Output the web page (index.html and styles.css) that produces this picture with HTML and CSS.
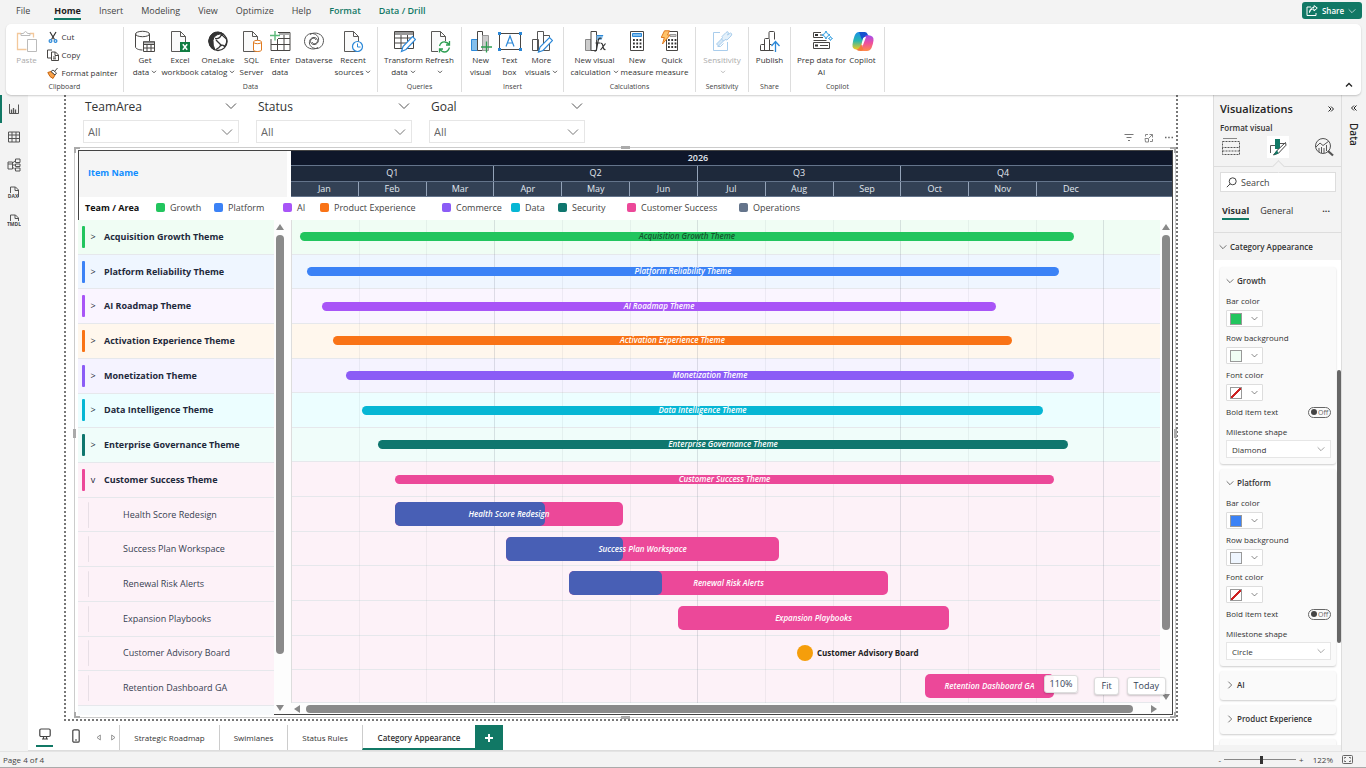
FILE: index.html
```html
<!DOCTYPE html>
<html lang="en">
<head>
<meta charset="utf-8">
<title>Roadmap report</title>
<link rel="stylesheet" href="styles.css">
</head>
<body>
<svg class="defs" aria-hidden="true">
  <symbol id="chev" viewBox="0 0 12 8"><path d="M1 1.500l5 5 5-5" fill="none" stroke="currentColor"/></symbol>
  <symbol id="mini" viewBox="0 0 6 4"><path d="M1 .8l2 2 2-2" fill="none" stroke="currentColor" stroke-width=".8"/></symbol>
  <symbol id="doc" viewBox="0 0 22 24"><path d="M2.500 1.500h9l5 5v15h-14z" fill="#fafafa" stroke="#5a5856"/><path d="M11.500 1.500v5h5" fill="none" stroke="#5a5856"/></symbol>
</svg>
<div class="app">
  <nav class="menu">
    <a href="#" class="m-file">File</a><a href="#" class="current">Home</a><a href="#">Insert</a><a href="#">Modeling</a><a href="#">View</a><a href="#">Optimize</a><a href="#">Help</a><a href="#" class="context">Format</a><a href="#" class="context">Data / Drill</a>
    <button class="share"><svg width="12" height="11" viewBox="0 0 12 11" fill="none" stroke="#fff"><path d="M5 2H1v8.500h9V8M3.500 7.500C4 5 5.500 4 8 4v2l3.300-3L8 .6v1.800C5 2.500 3.700 4.500 3.500 7.500z"/></svg>Share<svg width="8" height="6"><use href="#chev"/></svg></button>
  </nav>

  <div class="ribbon">
    <section class="group g-clip">
      <div class="tools">
        <button class="tool faded w30"><svg width="22" height="24" viewBox="0 0 22 24" fill="none"><path d="M5 3.500H1.500v16h9M14 3.500h3.500v4" stroke="#f3c89b" stroke-width="1.300"/><path d="M5 5.500v-2h2.500q2-4 4 0H14v2z" stroke="#bbb" fill="#fff"/><path d="M11.500 9.500h9v12h-9z" stroke="#bbb" fill="#fff"/></svg><span>Paste</span></button>
        <div class="stack">
          <button><svg width="12" height="12" viewBox="0 0 12 12" fill="none"><path d="M3 1l4.500 7.500M9 1L4.500 8.500" stroke="#333" stroke-width="1.200"/><circle cx="3.500" cy="10" r="1.400" stroke="#2b88d8" stroke-width="1.200"/><circle cx="8.500" cy="10" r="1.400" stroke="#2b88d8" stroke-width="1.200"/></svg>Cut</button>
          <button><svg width="12" height="12" viewBox="0 0 12 12" fill="none" stroke="#484644"><path d="M4 9H.5V1H5M4.500 3h4l3 3v5.500h-7zM8 3v3.500h3M6 8h3M6 9.800h3"/></svg>Copy</button>
          <button><svg width="12" height="12" viewBox="0 0 12 12"><path d="M.8 5.500l3.200-1L8 8l-2 3.500L3 9.500z" fill="#f7a24b" stroke="#c8640c"/><path d="M4 4.500L6 3l3.500 3L8 8zM7.500 4.500l3-3.500" fill="#fff" stroke="#484644"/></svg>Format painter</button>
        </div>
      </div>
      <h2>Clipboard</h2>
    </section>

    <section class="group g-data">
      <div class="tools">
        <button class="tool w32"><svg width="22" height="24" viewBox="0 0 22 24" fill="none" stroke="#484644"><path d="M1.500 4v13c0 1.500 3 3 7 3M15.500 4v7"/><ellipse cx="8.500" cy="4" rx="7" ry="2.700" fill="#fafafa"/><path d="M9.500 11.500h11v10h-11z" fill="#fff"/><path d="M9.500 14.500h11M9.500 18h11M13 14v7.500M17 14v7.500"/><path d="M10 12.500h10" stroke="#888" stroke-width="2"/></svg><span>Get<br>data<svg width="6" height="4"><use href="#mini"/></svg></span></button>
        <button class="tool w38"><svg width="22" height="24" viewBox="0 0 22 24"><use href="#doc"/><path d="M11 12h10v10H11z" fill="#107c41"/><path d="M13.800 14.300l4.400 5.400M18.200 14.300l-4.400 5.400" stroke="#fff" stroke-width="1.500"/></svg><span>Excel<br>workbook</span></button>
        <button class="tool w38"><svg width="22" height="24" viewBox="0 0 22 24" fill="none" stroke="#333"><circle cx="11" cy="11.500" r="9" stroke-width="1.300"/><path d="M11 2A9 9 0 0 0 3 15.500q1.500 3 5 4.500-2.500-5-2-9.500.5-5.500 7-6.500l4 .5q-2.500-2.500-6-2.500z" fill="#333"/><path d="M8 8.500q4.500 1 6.500-4L19.500 9q1 4-2 7.500-3-3-5.500 1l-3 2M9 10l5 5" stroke-width="1.300"/></svg><span>OneLake<br>catalog<svg width="6" height="4"><use href="#mini"/></svg></span></button>
        <button class="tool w29"><svg width="22" height="24" viewBox="0 0 22 24"><use href="#doc"/><path d="M12.500 12v8c0 2 8 2 8 0v-8" fill="#fff" stroke="#e07a1f"/><ellipse cx="16.500" cy="12" rx="4" ry="1.700" fill="#fff" stroke="#e07a1f"/></svg><span>SQL<br>Server</span></button>
        <button class="tool w28"><svg width="22" height="24" viewBox="0 0 22 24" fill="none" stroke="#484644"><path d="M9 2.500h12v18H2V9"/><path d="M10 4h10" stroke="#aaa" stroke-width="2"/><path d="M9 8.500h12M2 14.500h19M8.500 9v11.500M15 5v15.500"/><path d="M6 1v9.500M1 5.500h10" stroke="#5bb97a" stroke-width="1.400"/></svg><span>Enter<br>data</span></button>
        <button class="tool w40"><svg width="22" height="24" viewBox="0 0 22 24" fill="none" stroke="#555"><path d="M15 17.500C10 21 1.500 18 1.500 11.500 1.500 6 6 3 9.500 3.500 14 4 17 8 15 12c-1.500 3.500-7 3.500-7.500-.5C7.500 8 12 7 13 10"/><path d="M7 4.500C12 1 20.500 4 20.500 10.500c0 5.500-4.500 8.500-8 8C8 18 5 14 7 10c1.500-3.500 7-3.500 7.500.5 0 3.500-4.500 4.500-5.500 1.500"/></svg><span>Dataverse</span></button>
        <button class="tool w38"><svg width="22" height="24" viewBox="0 0 22 24"><use href="#doc"/><circle cx="15.500" cy="16.500" r="5" fill="#fff" stroke="#2b88d8" stroke-width="1.200"/><path d="M15.500 13.500v3.500h3" fill="none" stroke="#2b88d8"/></svg><span>Recent<br>sources<svg width="6" height="4"><use href="#mini"/></svg></span></button>
      </div>
      <h2>Data</h2>
    </section>

    <section class="group g-query">
      <div class="tools">
        <button class="tool w40"><svg width="24" height="24" viewBox="0 0 24 24" fill="none" stroke="#484644"><path d="M2.500 1.500h19v17h-19z"/><path d="M3 3.500h18" stroke="#999" stroke-width="3"/><path d="M2.500 8h19M2.500 13h19M9 5v13.500M15.500 5v13.500"/><path d="M9.500 21.500l1.500-5L20.500 6.500l3 3L14 19.500z" fill="#fff" stroke="#2b88d8" stroke-width="1.200"/></svg><span>Transform<br>data<svg width="6" height="4"><use href="#mini"/></svg></span></button>
        <button class="tool w32"><svg width="22" height="24" viewBox="0 0 22 24"><use href="#doc"/><path d="M9 11h13v13H9z" fill="#fff"/><path d="M10.500 16q1.500-4.500 5.500-4 3 .5 4.500 3M20.500 11v4H17M20.500 17.500q-1.500 4.500-5 4.500-3 0-4.500-3M10.500 22.500V19H14" fill="none" stroke="#2e9e52" stroke-width="1.300"/></svg><span>Refresh<br><svg width="6" height="4"><use href="#mini"/></svg></span></button>
      </div>
      <h2>Queries</h2>
    </section>

    <section class="group g-insert">
      <div class="tools">
        <button class="tool w29"><svg width="22" height="24" viewBox="0 0 22 24"><path d="M1.500 9.500h6v11h-6z" fill="#83beec" stroke="#2b88d8"/><path d="M7.500 1.500h5v19h-5z" fill="#fff" stroke="#484644"/><path d="M12.500 5.500h6v15h-6z" fill="#ccc" stroke="#999"/><path d="M16.500 11.500v11M11 17h11" stroke="#2e9e52" stroke-width="1.300"/></svg><span>New<br>visual</span></button>
        <button class="tool w29"><svg width="24" height="24" viewBox="0 0 24 24" fill="none"><path d="M1.500 3.500h21v16h-21z" stroke="#484644"/><path d="M8 16.500L12 6l4 10.500M9.500 13h5" stroke="#2b88d8" stroke-width="1.200"/><path d="M0 2h3v3H0zM21 2h3v3h-3zM0 18h3v3H0zM21 18h3v3h-3z" fill="#2b88d8"/></svg><span>Text<br>box</span></button>
        <button class="tool w35"><svg width="22" height="24" viewBox="0 0 22 24"><path d="M1.500 9.500h6v11h-6zM6.500 1.500h6v19h-6zM12.500 5.500h6v15h-6z" fill="#fff" stroke="#555"/><path d="M7.500 22l1.500-5 9.500-9.500 3 3L12 20.500z" fill="#fff" stroke="#2b88d8" stroke-width="1.200"/></svg><span>More<br>visuals<svg width="6" height="4"><use href="#mini"/></svg></span></button>
      </div>
      <h2>Insert</h2>
    </section>

    <section class="group g-calc">
      <div class="tools">
        <button class="tool w50"><svg width="22" height="24" viewBox="0 0 22 24"><path d="M1.500 9.500h5.500v11H1.500z" fill="#ccc" stroke="#888"/><path d="M7 1.500h5.500v19H7z" fill="#fff" stroke="#484644"/><path d="M12.500 5h7l-2 5h-5z" fill="#83beec"/><path d="M13 5.500h6" stroke="#2b88d8"/><path d="M17.500 8.500q-3-1.500-3.500 3l-1.500 8q-.5 2-2 1.500M11.500 13h5M17 13.500q1.500-.5 2 3t2.500 3M21.500 13.500l-5 6.500" fill="none" stroke="#333" stroke-width="1.200"/></svg><span>New visual<br>calculation<svg width="6" height="4"><use href="#mini"/></svg></span></button>
        <button class="tool w35"><svg width="22" height="24" viewBox="0 0 22 24"><path d="M4.500 1.500h13v19h-13z" fill="#fff" stroke="#484644"/><path d="M6.500 3.500h9v3h-9z" fill="#83beec" stroke="#2b88d8"/><path d="M7 10h8.500M7 13.500h8.500M7 17h8.500" stroke="#333" stroke-width="1.800" stroke-dasharray="1.800 1.500"/></svg><span>New<br>measure</span></button>
        <button class="tool w35"><svg width="22" height="24" viewBox="0 0 22 24"><path d="M5.500 1.500h11v19h-11z" fill="#fff" stroke="#484644"/><path d="M9 4.500h6v2H9z" fill="#ccc" stroke="#999"/><path d="M7 10h8.500M7 13.500h8.500M7 17h8.500" stroke="#333" stroke-width="1.800" stroke-dasharray="1.800 1.500"/><path d="M3.500.8h5L6.500 5H9L1.500 14l1.800-6.500H.2z" fill="#ffc36b" stroke="#e07a1f"/></svg><span>Quick<br>measure</span></button>
      </div>
      <h2>Calculations</h2>
    </section>

    <section class="group g-sens">
      <div class="tools">
        <button class="tool faded w40"><svg width="22" height="24" viewBox="0 0 22 24" fill="none" stroke="#a9cdec"><path d="M9 2.500H2.500v18h14V12"/><path d="M5.500 14L11 8.500l2 2L7.500 16z" fill="#d5e8f7"/><path d="M11 6.500l4-4q2-2 2.500.5l-1 2 3-2q2.500.5.5 3l-4 4-2-.5-1.500 1.500-2-2 1-1.500z" fill="#e3f0fa"/><path d="M6.500 16.500h3l3-3"/></svg><span>Sensitivity<br><svg width="6" height="4"><use href="#mini"/></svg></span></button>
      </div>
      <h2>Sensitivity</h2>
    </section>

    <section class="group g-share">
      <div class="tools">
        <button class="tool w35"><svg width="22" height="24" viewBox="0 0 22 24" fill="none" stroke="#484644"><path d="M10 8.500v-6q0-1 1-1h3.500q1 0 1 1v7M5.500 20.500V9.500q0-1 1-1h3q1 0 1 1v11M1.500 20.500v-5q0-1 1-1h3M1.500 20.500h13M10.500 14.500h2"/><path d="M16.500 22V12M12.500 16l4-4.500 4 4.500" stroke="#2b88d8" stroke-width="1.300"/></svg><span>Publish</span></button>
      </div>
      <h2>Share</h2>
    </section>

    <section class="group g-copilot">
      <div class="tools">
        <button class="tool w50"><svg width="22" height="24" viewBox="0 0 22 24" fill="none" stroke="#484644"><path d="M10 2.500H2.500v5H12M2.500 10.500h13M2.500 12.500h16v6H2.500z"/><path d="M4 4h3v2H4zM4 14.500h3v2H4z" fill="#333" stroke="none"/><path d="M9 5h2M9 15.500h8"/><path d="M15 1l1.300 2.700L19 5l-2.700 1.300L15 9l-1.300-2.700L11 5l2.700-1.300z" stroke="#2b9be0" fill="#fff"/><path d="M19.500 6.500l.7 1.300 1.300.7-1.300.7-.7 1.300-.7-1.300-1.300-.7 1.300-.7z" stroke="#2b9be0"/></svg><span>Prep data for<br>AI</span></button>
        <button class="tool w32"><svg width="24" height="24" viewBox="0 0 24 24"><defs><linearGradient id="ca" x1="0" y1="0" x2="0" y2="1"><stop offset="0" stop-color="#1b8fe8"/><stop offset=".5" stop-color="#28b8b0"/><stop offset="1" stop-color="#f4c91b"/></linearGradient><linearGradient id="cb" x1="0" y1="0" x2="0" y2="1"><stop offset="0" stop-color="#a04df0"/><stop offset=".5" stop-color="#ef4f9c"/><stop offset="1" stop-color="#ff8a4a"/></linearGradient></defs><path d="M13 5l-3 11q-1 3.500-4 3.500-5 0-4.500-5 .5-4.500 2-8.500Q5 2 8 2h6z" fill="url(#ca)"/><path d="M8 2h6q2 0 3 3l1 2h-4q-2 0-3 3z" fill="#1652cf"/><path d="M11 17l3-11q1-1 3.500-.8 5.500.3 5 5.300-.5 4-2 7.500-1.500 3-4.500 3H9z" fill="url(#cb)"/><path d="M5 19.500q3 0 4.500-4l1-2.500q0 4 2 6.500L10 21q-3 0-5-1.500z" fill="#f47a3c"/><path d="M10.500 15l3-8h1.500l-3 8z" fill="#fff"/></svg><span>Copilot</span></button>
      </div>
      <h2>Copilot</h2>
    </section>
    <button class="collapse" aria-label="Collapse ribbon"><svg width="8" height="6" viewBox="0 0 8 6"><path d="M1 4.500l3-3 3 3" fill="none" stroke="#222" stroke-width="1.300"/></svg></button>
  </div>

  <div class="workspace">
    <nav class="rail">
      <button class="on" aria-label="Report view"><svg width="12" height="12" viewBox="0 0 12 12" fill="none" stroke="#555"><path d="M1.500 1v9.500h9V1.500" /><path d="M3.500 10V6.500M5.500 10V5M7.500 10V6.500" stroke-width="1.300"/></svg></button>
      <button aria-label="Table view"><svg width="12" height="12" viewBox="0 0 12 12" fill="none" stroke="#555"><path d="M.5 1h11v10H.5zM.5 4h11M.5 7.500h11M4 1v10M8 1v10"/></svg></button>
      <button aria-label="Model view"><svg width="14" height="14" viewBox="0 0 14 14" fill="none" stroke="#555"><path d="M1 4h4.500v7H1zM1 6h4.500M8.500 1h4.500v3.500H8.500zM8.500 6h4.500v2.500H8.500zM8.500 10h4.500v3H8.500zM5.500 5L8 3M5.500 7H8M5.500 9L8 11.500"/></svg></button>
      <button aria-label="DAX query view"><svg width="14" height="14" viewBox="0 0 14 14"><path d="M3.500 7V1h5l3 3v7M8 1v3.500h3.500" fill="none" stroke="#555"/><text x="6" y="12" class="mark">DAX</text></svg></button>
      <button aria-label="TMDL view"><svg width="14" height="14" viewBox="0 0 14 14"><path d="M3.500 7V1h5l3 3v3M8 1v3.500h3.500" fill="none" stroke="#555"/><text x="7" y="12" class="mark">TMDL</text></svg></button>
    </nav>

    <main class="canvas">
      <div class="page">
        <div class="slicers">
          <div class="slicer"><label for="s1">TeamArea</label><svg class="top-chev" width="12" height="8"><use href="#chev"/></svg><div class="drop"><select id="s1"><option>All</option></select><svg width="12" height="8"><use href="#chev"/></svg></div></div>
          <div class="slicer"><label for="s2">Status</label><svg class="top-chev" width="12" height="8"><use href="#chev"/></svg><div class="drop"><select id="s2"><option>All</option></select><svg width="12" height="8"><use href="#chev"/></svg></div></div>
          <div class="slicer"><label for="s3">Goal</label><svg class="top-chev" width="12" height="8"><use href="#chev"/></svg><div class="drop"><select id="s3"><option>All</option></select><svg width="12" height="8"><use href="#chev"/></svg></div></div>
          <div class="visual-tools">
            <button aria-label="Filters"><svg width="10" height="10" viewBox="0 0 10 10"><path d="M.5 1.500h9M2.500 4.500h5M4 7.500h2" stroke="#777"/></svg></button>
            <button aria-label="Focus mode"><svg width="10" height="10" viewBox="0 0 10 10" fill="none" stroke="#888"><path d="M4 1.500H1.500v2M1 5.500h3.500V9H1.500zM6 8.500h2.500V6M5.500 1.500h3v3M8.500 1.500L5 5"/></svg></button>
            <button aria-label="More options"><svg width="10" height="10" viewBox="0 0 10 10"><path d="M1 4.500h1.500M4.200 4.500h1.500M7.500 4.500H9" stroke="#666" stroke-width="1.300"/></svg></button>
          </div>
        </div>

        <div class="frame">
          <i class="grip tl"></i><i class="grip tr"></i><i class="grip bl"></i><i class="grip br"></i><i class="grip tc"></i><i class="grip bc"></i><i class="grip lc"></i><i class="grip rc"></i>
          <div class="gantt">
            <div class="head">
              <div class="item-head">Item Name</div>
              <div class="time">
                <div class="band year"><span>2026</span></div>
                <div class="band quarters"><span>Q1</span><span>Q2</span><span>Q3</span><span>Q4</span></div>
                <div class="band months"><span>Jan</span><span>Feb</span><span>Mar</span><span>Apr</span><span>May</span><span>Jun</span><span>Jul</span><span>Aug</span><span>Sep</span><span>Oct</span><span>Nov</span><span>Dec</span></div>
              </div>
            </div>
            <div class="legend"><b>Team / Area</b><span class="growth">Growth</span><span class="platform">Platform</span><span class="ai">AI</span><span class="product">Product Experience</span><span class="commerce">Commerce</span><span class="data">Data</span><span class="security">Security</span><span class="success">Customer Success</span><span class="ops">Operations</span></div>
            <div class="body">
              <div class="names">
                <div class="name growth"><button>&gt;</button>Acquisition Growth Theme</div>
                <div class="name platform"><button>&gt;</button>Platform Reliability Theme</div>
                <div class="name ai"><button>&gt;</button>AI Roadmap Theme</div>
                <div class="name product"><button>&gt;</button>Activation Experience Theme</div>
                <div class="name commerce"><button>&gt;</button>Monetization Theme</div>
                <div class="name data"><button>&gt;</button>Data Intelligence Theme</div>
                <div class="name security"><button>&gt;</button>Enterprise Governance Theme</div>
                <div class="name success"><button>v</button>Customer Success Theme</div>
                <div class="name success child">Health Score Redesign</div>
                <div class="name success child">Success Plan Workspace</div>
                <div class="name success child">Renewal Risk Alerts</div>
                <div class="name success child">Expansion Playbooks</div>
                <div class="name success child">Customer Advisory Board</div>
                <div class="name success child">Retention Dashboard GA</div>
                <div class="tail"></div>
              </div>
              <div class="vbar names-bar"><i class="up"></i><i class="thumb"></i><i class="down"></i></div>
              <div class="plot-area">
                <div class="plot">
                  <div class="lines"><i></i><i></i><i></i><i></i><i></i><i></i><i></i><i></i><i></i><i></i><i></i><i></i><i></i></div>
                  <div class="row growth"><div class="bar thin dark" style="--from:8;--to:782">Acquisition Growth Theme</div></div>
                  <div class="row platform"><div class="bar thin" style="--from:15;--to:767">Platform Reliability Theme</div></div>
                  <div class="row ai"><div class="bar thin" style="--from:30;--to:704">AI Roadmap Theme</div></div>
                  <div class="row product"><div class="bar thin" style="--from:41;--to:720">Activation Experience Theme</div></div>
                  <div class="row commerce"><div class="bar thin" style="--from:54;--to:782">Monetization Theme</div></div>
                  <div class="row data"><div class="bar thin" style="--from:70;--to:751">Data Intelligence Theme</div></div>
                  <div class="row security"><div class="bar thin" style="--from:86;--to:776">Enterprise Governance Theme</div></div>
                  <div class="row success"><div class="bar thin" style="--from:103;--to:762">Customer Success Theme</div></div>
                  <div class="row success"><div class="bar" style="--from:103;--to:331;--done:66%">Health Score Redesign</div></div>
                  <div class="row success"><div class="bar" style="--from:214;--to:487;--done:43%">Success Plan Workspace</div></div>
                  <div class="row success"><div class="bar" style="--from:277;--to:596;--done:29%">Renewal Risk Alerts</div></div>
                  <div class="row success"><div class="bar" style="--from:386;--to:657;--done:0%">Expansion Playbooks</div></div>
                  <div class="row success"><div class="milestone" style="--from:505">Customer Advisory Board</div></div>
                  <div class="row success"><div class="bar" style="--from:633;--to:762;--done:0%">Retention Dashboard GA</div></div>
                </div>
                <div class="vbar plot-bar"><i class="up"></i><i class="thumb"></i><i class="down"></i></div>
                <div class="hbar"><i class="left"></i><i class="thumb"></i><i class="right"></i></div>
                <div class="zoomers"><output>110%</output><button>Fit</button><button>Today</button></div>
              </div>
            </div>
          </div>
        </div>
      </div>

      <nav class="pages">
        <button class="view on" aria-label="Desktop layout"><svg width="12" height="12" viewBox="0 0 12 12" fill="none" stroke="#444" stroke-width="1.200"><rect x=".8" y="1" width="10.400" height="7.500" rx="1.200"/><path d="M4.500 8.500v2M7.500 8.500v2M3 11h6"/></svg></button>
        <button class="view" aria-label="Mobile layout"><svg width="8" height="14" viewBox="0 0 8 14" fill="none" stroke="#444" stroke-width="1.200"><rect x=".8" y=".8" width="6.400" height="12.400" rx="1.300"/><path d="M3 11h2"/></svg></button>
        <button class="step" aria-label="Previous page"><svg width="5" height="7" viewBox="0 0 5 7"><path d="M4.300 1v5L1 3.500z" fill="none" stroke="#888" stroke-width=".9"/></svg></button>
        <button class="step" aria-label="Next page"><svg width="5" height="7" viewBox="0 0 5 7"><path d="M.7 1v5L4 3.500z" fill="none" stroke="#888" stroke-width=".9"/></svg></button>
        <a href="#" class="p1">Strategic Roadmap</a><a href="#" class="p2">Swimlanes</a><a href="#" class="p3">Status Rules</a><a href="#" class="p4 current">Category Appearance</a><button class="add" aria-label="New page"><svg width="10" height="10" viewBox="0 0 10 10"><path d="M5 1v8M1 5h8" stroke="#fff" stroke-width="2"/></svg></button>
      </nav>
    </main>

    <aside class="panel">
      <header>
        <h1>Visualizations</h1>
        <button class="fold" aria-label="Collapse pane"><svg width="6" height="6" viewBox="0 0 6 6" fill="none" stroke="#222"><path d="M.5.500L3 3 .5 5.500M3 .5L5.500 3 3 5.500"/></svg></button>
      </header>
      <p class="sub">Format visual</p>
      <div class="modes">
        <button aria-label="Build visual"><svg width="20" height="20" viewBox="0 0 20 20" fill="none" stroke="#555"><path d="M2 1.500h14" stroke="#888"/><path d="M1.500 4.500h17v6h-17zM1.500 10.500v7h17v-7M1.500 14h17" stroke-dasharray="2 1"/></svg></button>
        <button class="on" aria-label="Format visual"><svg width="18" height="18" viewBox="0 0 18 18"><path d="M6 1h5v10H6z" fill="#117865"/><path d="M1.500 15V7.500H6M11 5.500h4" fill="none" stroke="#555"/><path d="M16.500 4.500L8 12.500 4.500 17l5-1.800 7.500-8z" fill="#fff" stroke="#444"/><path d="M8 12L4.500 17l5-1.500z" fill="#117865"/></svg></button>
        <button aria-label="Analytics"><svg width="20" height="20" viewBox="0 0 20 20" fill="none" stroke="#555"><circle cx="9" cy="9" r="7.500"/><path d="M2 10l4-4 3 2.500L15 4M5 15v-4M7.500 16v-6M10 16v-5M12.500 14V8"/><path d="M14 14l5 4.500" stroke-width="2.200"/></svg></button>
      </div>
      <div class="search"><svg width="11" height="11" viewBox="0 0 11 11" fill="none" stroke="#444"><circle cx="6.700" cy="4.300" r="3.500"/><path d="M4.200 6.800L.8 10.200"/></svg><input type="text" placeholder="Search" aria-label="Search"></div>
      <div class="tabs"><button class="on">Visual</button><button>General</button><button class="dots" aria-label="More">···</button></div>
      <button class="section"><svg width="8" height="6"><use href="#chev"/></svg>Category Appearance</button>
      <div class="cards">
        <section class="card">
          <h3><svg width="8" height="6"><use href="#chev"/></svg>Growth</h3>
          <label>Bar color<button class="color"><i class="c-growth"></i><svg width="7" height="5"><use href="#chev"/></svg></button></label>
          <label>Row background<button class="color"><i class="c-mint"></i><svg width="7" height="5"><use href="#chev"/></svg></button></label>
          <label>Font color<button class="color"><i class="c-none"></i><svg width="7" height="5"><use href="#chev"/></svg></button></label>
          <label class="switch">Bold item text<span><input type="checkbox">Off</span></label>
          <label for="m1">Milestone shape</label>
          <div class="drop"><select id="m1"><option>Diamond</option></select><svg width="8" height="6"><use href="#chev"/></svg></div>
        </section>
        <section class="card">
          <h3><svg width="8" height="6"><use href="#chev"/></svg>Platform</h3>
          <label>Bar color<button class="color"><i class="c-platform"></i><svg width="7" height="5"><use href="#chev"/></svg></button></label>
          <label>Row background<button class="color"><i class="c-sky"></i><svg width="7" height="5"><use href="#chev"/></svg></button></label>
          <label>Font color<button class="color"><i class="c-none"></i><svg width="7" height="5"><use href="#chev"/></svg></button></label>
          <label class="switch">Bold item text<span><input type="checkbox">Off</span></label>
          <label for="m2">Milestone shape</label>
          <div class="drop"><select id="m2"><option>Circle</option></select><svg width="8" height="6"><use href="#chev"/></svg></div>
        </section>
        <section class="card closed"><h3><svg class="side" width="8" height="6"><use href="#chev"/></svg>AI</h3></section>
        <section class="card closed"><h3><svg class="side" width="8" height="6"><use href="#chev"/></svg>Product Experience</h3></section>
        <section class="card closed"></section>
        <i class="scroll"></i>
      </div>
    </aside>
    <aside class="data-pane"><button aria-label="Expand pane"><svg width="6" height="6" viewBox="0 0 6 6" fill="none" stroke="#222"><path d="M3 .5L.5 3 3 5.500M5.500.500L3 3l2.500 2.500"/></svg></button><b>Data</b></aside>
  </div>

  <footer class="status"><span>Page 4 of 4</span>
    <div class="zoom"><button>-</button><input type="range" min="0" max="100" value="52" aria-label="Zoom"><button>+</button><span>122%</span><button aria-label="Fit to page"><svg width="11" height="9" viewBox="0 0 11 9" fill="none" stroke="#666"><rect x=".5" y=".5" width="10" height="8" rx="1"/><path d="M2.500 3.500v-1H4M7 2.500h1.500v1M8.500 5.500v1H7M4 6.500H2.500v-1"/></svg></button></div>
  </footer>
</div>
</body>
</html>
```
FILE: styles.css
```css
* { box-sizing: border-box; }
body { margin: 0; font: 8px/11px "Open Sans", "Noto Sans", sans-serif; color: #333; background: #f3f3f3; }
button, input, select { font: inherit; color: inherit; border: 0; padding: 0; margin: 0; background: none; border-radius: 0; }
select { appearance: none; }
a { color: inherit; text-decoration: none; }
h1, h2, h3, p { margin: 0; font-weight: 400; }
i { font-style: normal; }
svg { display: block; flex: none; }
.defs { position: absolute; width: 0; height: 0; }
.app { display: flex; flex-direction: column; height: 100vh; overflow: hidden; }

/* menu bar */
.menu { display: flex; align-items: center; gap: 18px; height: 24px; padding: 0 4px 4px 16px; font-size: 9px; line-height: 14px; color: #444; flex: none; }
.menu a { border-bottom: 2px solid transparent; padding-top: 3px; }
.menu .m-file { margin-right: 6px; }
.menu .current { font-weight: 700; color: #222; border-color: #117865; }
.menu .context { font-weight: 600; color: #117865; }
.share { display: flex; align-items: center; justify-content: space-between; width: 60px; height: 17px; margin-left: auto; margin-top: 1px; padding: 0 6px 0 4px; border-radius: 3px; background: #117865; color: #fff; font-size: 8px; font-weight: 600; }

/* ribbon */
.ribbon { display: flex; height: 71px; margin: 0 5px 0 6px; padding: 3px 0; border-radius: 5px; background: #fff; box-shadow: 0 1px 2px #0003; flex: none; position: relative; z-index: 1; }
.group { display: flex; flex-direction: column; border-right: 1px solid #ddd; flex: none; }
.group h2 { font-size: 7px; line-height: 10px; text-align: center; margin-top: auto; color: #444; }
.tools { display: flex; justify-content: center; padding-top: 3px; height: 53px; }
.tool { display: flex; flex-direction: column; align-items: center; white-space: nowrap; flex: none; line-height: 12px; }
.tool span svg { display: inline-block; margin-left: 2px; vertical-align: 1px; }
.faded { color: #aaa; }
.stack { display: grid; gap: 3px; padding-left: 5px; align-content: start; margin-top: -1px; }
.stack button { display: flex; align-items: center; gap: 3px; height: 15px; white-space: nowrap; }
.w28 { width: 28px; } .w29 { width: 29px; } .w30 { width: 30px; } .w32 { width: 32px; } .w35 { width: 35px; } .w38 { width: 38px; } .w40 { width: 40px; } .w50 { width: 50px; }
.g-clip { width: 118px; } .g-data { width: 254px; } .g-query { width: 84px; } .g-insert { width: 102px; }
.g-calc { width: 132px; } .g-sens { width: 53px; } .g-share { width: 42px; } .g-copilot { width: 94px; }
.collapse { margin: auto 8px 4px auto; }

.workspace { display: flex; flex: 1; min-height: 0; }
.rail { width: 28px; flex: none; background: #f3f3f3; display: flex; flex-direction: column; }
.rail button { height: 28px; display: grid; place-items: center; border-left: 2px solid transparent; padding-right: 2px; }
.rail .on { border-color: #117865; }
.mark { font-size: 5px; font-weight: 700; text-anchor: middle; fill: #444; }

/* canvas */
.canvas { flex: 1; min-width: 0; display: flex; flex-direction: column; background: #fff; }
.page { flex: 1; min-height: 0; display: flex; flex-direction: column; margin: 0 35px 4px 36px; padding-bottom: 1px; border: 2px dotted #777; border-top: 0; }
.slicers { display: flex; gap: 17px; padding: 4px 2px 4px 17px; flex: none; }
.slicer { display: grid; grid-template-columns: 1fr 20px; width: 156px; }
.slicer label { font-size: 12px; line-height: 16px; padding-left: 2px; color: #333; }
.top-chev { margin-top: 3px; margin-right: 2px; justify-self: end; color: #555; }
.drop { display: grid; grid-column: 1 / -1; align-items: center; border: 1px solid #e6e6e6; background: #fff; }
.drop > * { grid-area: 1 / 1; }
.drop svg { justify-self: end; margin-right: 5px; color: #777; pointer-events: none; }
.slicer .drop { height: 23px; margin-top: 5px; }
.slicer select { font-size: 11px; height: 21px; padding-left: 4px; color: #666; }
.visual-tools { display: flex; gap: 10px; margin-left: auto; align-self: end; }

.frame { position: relative; flex: 1; min-height: 0; margin: 0 0 0 8px; border: 1px solid #ccc; padding: 2px 2px 2px 3px; display: flex; }
.grip { position: absolute; width: 6px; height: 6px; border: 0 solid #aaa; }
.tl { left: -1px; top: -1px; border-width: 2px 0 0 2px; } .tr { right: -1px; top: -1px; border-width: 2px 2px 0 0; }
.bl { left: -1px; bottom: -1px; border-width: 0 0 2px 2px; } .br { right: -1px; bottom: -1px; border-width: 0 2px 2px 0; }
.tc, .bc { left: calc(50% - 4px); width: 9px; height: 3px; background: #aaa; } .tc { top: -2px; } .bc { bottom: -2px; }
.lc, .rc { top: calc(50% - 4px); width: 3px; height: 9px; background: #aaa; } .lc { left: -2px; } .rc { right: -2px; }
.gantt { flex: 1; min-width: 0; display: flex; flex-direction: column; border: solid #444; border-width: 1px 1px 0 0; font-size: 9px; line-height: 12px; }

.head { display: flex; height: 46px; flex: none; border-left: 1px solid #444; }
.item-head { width: 208px; margin-right: 4px; flex: none; padding-left: 9px; line-height: 44px; background: #f5f5f5; color: #118dff; font-weight: 700; }
.time { flex: 1; display: grid; grid-template-rows: 15px 16px 15px; color: #e2e8f0; font-size: 9px; }
.band { display: grid; grid-template-columns: repeat(12, 1fr) .99fr; text-align: center; border-bottom: 1px solid #64748b; line-height: 14px; }
.year { background: #0f172a; font-weight: 600; line-height: 13px; } .year span { grid-column: 1 / 13; }
.quarters { background: #1e293b; } .quarters span { grid-column: span 3; border-right: 1px solid #94a3b8; }
.months { background: #334155; } .months span { border-right: 1px solid #94a3b8; }
.band span:last-child { border-right: 0; }

.legend { display: grid; grid-template-columns: 71px 58px 69px 37px 122px 69px 47px 69px 112px auto; align-items: center; height: 23px; padding: 0 0 2px 6px; flex: none; color: #444; white-space: nowrap; border-left: 1px solid #444; }
.legend b { color: #111; }
.legend span { display: flex; align-items: center; gap: 5px; }
.legend span::before { content: ""; width: 9px; height: 9px; border-radius: 2px; background: var(--c); }

.growth { --c: #22c55e; --bg: #f0fdf4; } .platform { --c: #3b82f6; --bg: #eff6ff; } .ai { --c: #a855f7; --bg: #faf5ff; }
.product { --c: #f97316; --bg: #fff7ed; } .commerce { --c: #8b5cf6; --bg: #f5f3ff; } .data { --c: #06b6d4; --bg: #ecfeff; }
.security { --c: #0f766e; --bg: #f0fdfa; } .success { --c: #ec4899; --bg: #fdf2f8; } .ops { --c: #64748b; }

.body { flex: 1; min-height: 0; display: flex; }
.names { width: 196px; flex: none; display: grid; grid-template-rows: repeat(14, 1fr) 9px; }
.name { display: flex; align-items: center; background: var(--bg); border-bottom: 1px solid #e6e8ec; padding-left: 4px; font-weight: 700; color: #1e293b; white-space: nowrap; }
.name::before { content: ""; width: 3px; height: 22px; border-radius: 1px; background: var(--c); }
.name button { width: 19px; font-weight: 400; padding-right: 3px; text-align: center; }
.child { font-weight: 400; color: #374151; padding-left: 10px; }
.child::before { width: 1px; height: 26px; background: #e8dfe6; margin-right: 34px; }
.tail { background: #f8fafc; }
.vbar { display: flex; flex-direction: column; align-items: center; background: #fdfdfd; }
.vbar .thumb { width: 8px; border-radius: 4px; background: #8a8a8a; }
.up, .down, .left, .right { border: 4px solid transparent; flex: none; }
.up { border-bottom: 6px solid #888; border-top: 0; } .down { border-top: 6px solid #888; border-bottom: 0; margin-top: auto; }
.left { border-right: 6px solid #888; border-left: 0; } .right { border-left: 6px solid #888; border-right: 0; }
.names-bar { width: 17px; padding: 4px 5px 3px 0; flex: none; border-bottom: 1px solid #444; }
.names-bar .thumb { height: 86%; margin-top: 5px; }

.plot-area { position: relative; flex: 1; min-width: 0; display: grid; grid-template: 1fr 11px / 1fr 12px; border-bottom: 1px solid #444; }
.plot { position: relative; display: grid; grid-template-rows: repeat(13, 35fr) 33fr; min-height: 0; border-left: 1px solid #ddd; }
.lines { position: absolute; inset: 0; display: grid; grid-template-columns: repeat(12, 1fr) .82fr; z-index: 0; pointer-events: none; }
.lines i { border-right: 1px solid #6b728016; } .lines i:nth-child(3n) { border-right: 1px solid #6b728033; } .lines i:last-child { border: 0; }
.row { background: var(--bg); border-bottom: 1px solid #e6e8ec; display: flex; align-items: center; min-width: 0; }
.bar { position: relative; margin-left: calc(var(--from) / 868 * 100%); width: calc((var(--to) - var(--from)) / 868 * 100%); height: 24px; border-radius: 5px; background: var(--c); color: #fff; font-size: 8px; line-height: 23px; font-weight: 600; font-style: italic; text-align: center; white-space: nowrap; z-index: 0; }
.bar::before { content: ""; position: absolute; z-index: -1; inset: 0 auto 0 0; width: var(--done); border-radius: 5px; background: #485fb5; }
.thin { height: 9px; line-height: 8px; border-radius: 5px; } .thin::before { display: none; }
.dark { color: #14532d; }
.milestone { display: flex; align-items: center; gap: 4px; margin-left: calc(var(--from) / 868 * 100%); color: #222; font-size: 8px; font-weight: 700; position: relative; }
.milestone::before { content: ""; width: 16px; height: 16px; border-radius: 50%; background: #f59e0b; }
.plot-bar { padding: 4px 0 3px; } .plot-bar .thumb { height: 83%; margin-top: 5px; }
.hbar { grid-column: 1 / -1; display: flex; align-items: center; justify-content: space-between; background: #fdfdfd; padding: 0 15px 0 3px; }
.hbar .thumb { height: 8px; border-radius: 4px; background: #8a8a8a; flex: 1; margin: 0 18px 0 6px; }
.zoomers { position: absolute; right: 6px; bottom: 19px; display: flex; align-items: flex-start; z-index: 2; color: #334155; }
.zoomers > * { border: 1px solid #ddd; border-radius: 3px; background: #fff; height: 18px; line-height: 16px; padding: 0 6px; box-shadow: 0 1px 2px #0003; }
.zoomers output { background: #fffffff0; margin-right: 16px; padding: 0 5px; }
.zoomers button { margin: 2px 0 0 8px; } .zoomers output + button { margin-left: 0; }

/* page tabs */
.pages { display: flex; height: 26px; flex: none; align-items: stretch; border-bottom: 1px solid #ddd; line-height: 26px; text-align: center; color: #333; }
.view { display: grid; place-items: center; width: 17px; margin-left: 8px; padding-bottom: 4px; } .view + .view { margin-left: 15px; width: 16px; }
.view.on { border-bottom: 2px solid #117865; padding-bottom: 2px; margin-bottom: 3px; }
.step { width: 15px; padding-left: 5px; display: grid; place-items: center; } .view + .step { margin-left: 4px; }
.pages a { border-left: 1px solid #ccc; white-space: nowrap; }
.pages .p1 { width: 100px; margin-left: 1px; } .pages .p2 { width: 68px; } .pages .p3 { width: 75px; } .pages .p4 { width: 113px; }
.pages .current { font-weight: 600; border-bottom: 2px solid #117865; }
.add { width: 28px; background: #117865; display: grid; place-items: center; }

/* format pane */
.panel { width: 129px; flex: none; display: flex; flex-direction: column; border-left: 1px solid #ddd; border-right: 1px solid #ddd; background: #f3f3f3; padding-bottom: 6px; }
.panel header { display: flex; justify-content: space-between; align-items: center; padding: 6px 7px 0 6px; }
.panel h1 { font-size: 11px; line-height: 16px; font-weight: 600; color: #222; }
.sub { padding-left: 6px; font-weight: 600; line-height: 12px; margin-top: 5px; }
.modes { position: relative; display: flex; justify-content: space-between; padding: 2px 6px 8px; border-bottom: 1px solid #ddd; }
.modes::after { content: ""; position: absolute; left: calc(50% - 4px); bottom: -5px; width: 8px; height: 8px; background: #f3f3f3; border: solid #ddd; border-width: 1px 0 0 1px; transform: rotate(45deg); }
.modes button { width: 22px; height: 22px; display: grid; place-items: center; }
.modes .on { background: #fff; }
.search { display: flex; align-items: center; gap: 4px; height: 20px; margin: 5px 5px 0 6px; padding-left: 5px; border: 1px solid #ddd; background: #fff; font-size: 9px; flex: none; }
.search input { width: 90px; outline: 0; } .search input::placeholder { color: #444; }
.tabs { display: flex; gap: 11px; margin-top: 11px; padding: 0 11px 12px 8px; border-bottom: 1px solid #ddd; font-size: 9px; line-height: 15px; }
.tabs button { border-bottom: 2px solid transparent; } .tabs .on { font-weight: 700; border-color: #117865; } .tabs .dots { margin-left: auto; font-weight: 700; }
.section { display: flex; align-items: center; gap: 3px; height: 27px; flex: none; padding-left: 5px; font-weight: 600; white-space: nowrap; }
.cards { position: relative; flex: 1; min-height: 0; overflow: hidden; background: #fff; padding: 7px 6px 0; display: flex; flex-direction: column; gap: 5px; }
.card { flex: none; background: #fafafa; border-radius: 3px; box-shadow: 0 1px 2px #0003; padding: 0 5px 6px 6px; height: 197px; margin-right: -1px; }
.card.closed { height: 29px; }
.card h3 { display: flex; align-items: center; gap: 3px; font-size: 8px; font-weight: 600; line-height: 27px; white-space: nowrap; }
.card label { display: block; line-height: 14px; white-space: nowrap; }
.color { display: flex; align-items: center; justify-content: space-between; width: 37px; height: 17px; margin: 2px 0 4px; padding: 0 4px 0 3px; border: 1px solid #ddd; background: #fff; border-radius: 1px; }
.color i { width: 12px; height: 12px; border: 1px solid #999; }
.c-growth { background: #22c55e; } .c-mint { background: #f0fdf4; } .c-platform { background: #3b82f6; } .c-sky { background: #eff6ff; }
.c-none { background: linear-gradient(135deg, #fff 43%, #c22 44%, #c22 56%, #fff 57%); }
.card .switch { display: flex; justify-content: space-between; align-items: center; margin-bottom: 6px; }
.switch span { display: flex; align-items: center; gap: 1px; width: 23px; height: 11px; border: 1px solid #666; border-radius: 6px; padding-left: 2px; font-size: 7px; line-height: 9px; color: #666; }
.switch input { appearance: none; width: 6px; height: 6px; border-radius: 50%; background: #444; flex: none; }
.card .drop { height: 18px; margin-top: 1px; } .card select { padding-left: 5px; height: 16px; }
.side { transform: rotate(-90deg); }
.scroll { position: absolute; right: 0; top: 110px; width: 4px; height: 273px; border-radius: 2px; background: #666; }
.data-pane { width: 24px; flex: none; display: flex; flex-direction: column; align-items: center; gap: 12px; padding-top: 10px; }
.data-pane b { writing-mode: vertical-rl; font-size: 10px; line-height: 14px; font-weight: 600; color: #222; }

.status { display: flex; align-items: center; justify-content: space-between; height: 17px; flex: none; padding: 0 13px 0 3px; border-bottom: 1px solid #aaa; border-top: 1px solid #e4e4e4; background: #f3f3f3; color: #444; }
.zoom { display: flex; align-items: center; gap: 3px; } .zoom span { margin: 0 6px; }
.zoom input { appearance: none; width: 72px; height: 10px; background: linear-gradient(#888, #888) center / 100% 1px no-repeat; }
.zoom input::-webkit-slider-thumb { appearance: none; width: 3px; height: 8px; background: #333; }
```
